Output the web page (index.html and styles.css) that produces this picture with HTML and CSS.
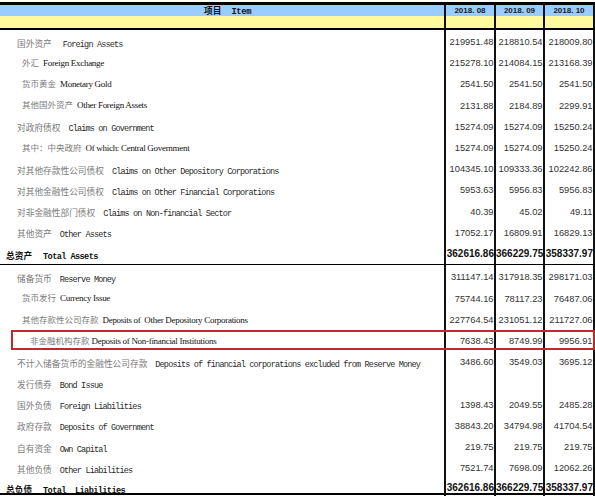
FILE: index.html
```html
<!DOCTYPE html>
<html lang="zh">
<head>
<meta charset="utf-8">
<title>资产负债表</title>
<link rel="stylesheet" href="styles.css">
</head>
<body>
<div class="sheet">
  <div class="row head-blue">
    <div class="lab lab-head"><span class="zh-b">项目</span><span class="mono-b">Item</span></div>
    <div class="num yr">2018. 08</div>
    <div class="num yr">2018. 09</div>
    <div class="num yr">2018. 10</div>
  </div>
  <div class="row head-yellow">
    <div class="lab"></div><div class="num"></div><div class="num"></div><div class="num"></div>
  </div>

  <div class="row m">
    <div class="lab i1"><span class="zh">国外资产</span><span class="en wide">Foreign Assets</span></div>
    <div class="num">219951.48</div><div class="num">218810.54</div><div class="num">218009.80</div>
  </div>
  <div class="row t">
    <div class="lab i2"><span class="zh">外汇</span><span class="tm">Foreign Exchange</span></div>
    <div class="num">215278.10</div><div class="num">214084.15</div><div class="num">213168.39</div>
  </div>
  <div class="row t">
    <div class="lab i2"><span class="zh">货币黄金</span><span class="tm">Monetary Gold</span></div>
    <div class="num">2541.50</div><div class="num">2541.50</div><div class="num">2541.50</div>
  </div>
  <div class="row t">
    <div class="lab i2"><span class="zh">其他国外资产</span><span class="tm">Other Foreign Assets</span></div>
    <div class="num">2131.88</div><div class="num">2184.89</div><div class="num">2299.91</div>
  </div>
  <div class="row m">
    <div class="lab i1"><span class="zh">对政府债权</span><span class="en">Claims on Government</span></div>
    <div class="num">15274.09</div><div class="num">15274.09</div><div class="num">15250.24</div>
  </div>
  <div class="row t">
    <div class="lab i2"><span class="zh">其中：中央政府</span><span class="tm">Of which: Central Government</span></div>
    <div class="num">15274.09</div><div class="num">15274.09</div><div class="num">15250.24</div>
  </div>
  <div class="row m">
    <div class="lab i1"><span class="zh">对其他存款性公司债权</span><span class="en">Claims on Other Depository Corporations</span></div>
    <div class="num">104345.10</div><div class="num">109333.36</div><div class="num">102242.86</div>
  </div>
  <div class="row m">
    <div class="lab i1"><span class="zh">对其他金融性公司债权</span><span class="en">Claims on Other Financial Corporations</span></div>
    <div class="num">5953.63</div><div class="num">5956.83</div><div class="num">5956.83</div>
  </div>
  <div class="row m">
    <div class="lab i1"><span class="zh">对非金融性部门债权</span><span class="en">Claims on Non-financial Sector</span></div>
    <div class="num">40.39</div><div class="num">45.02</div><div class="num">49.11</div>
  </div>
  <div class="row m">
    <div class="lab i1"><span class="zh">其他资产</span><span class="en">Other Assets</span></div>
    <div class="num">17052.17</div><div class="num">16809.91</div><div class="num">16829.13</div>
  </div>
  <div class="row m tot tot-assets">
    <div class="lab i0"><span class="zh-b">总资产</span><span class="en-b">Total Assets</span></div>
    <div class="num">362616.86</div><div class="num">366229.75</div><div class="num">358337.97</div>
  </div>

  <div class="row m">
    <div class="lab i1"><span class="zh">储备货币</span><span class="en">Reserve Money</span></div>
    <div class="num">311147.14</div><div class="num">317918.35</div><div class="num">298171.03</div>
  </div>
  <div class="row t">
    <div class="lab i2"><span class="zh">货币发行</span><span class="tm">Currency Issue</span></div>
    <div class="num">75744.16</div><div class="num">78117.23</div><div class="num">76487.06</div>
  </div>
  <div class="row t">
    <div class="lab i2"><span class="zh">其他存款性公司存款</span><span class="tm">Deposits of&nbsp; Other Depository Corporations</span></div>
    <div class="num">227764.54</div><div class="num">231051.12</div><div class="num">211727.06</div>
  </div>
  <div class="row t">
    <div class="lab i3"><span class="zh">非金融机构存款</span><span class="tm tight">Deposits of Non-financial Institutions</span></div>
    <div class="num">7638.43</div><div class="num">8749.99</div><div class="num">9956.91</div>
  </div>
  <div class="row m">
    <div class="lab i1"><span class="zh">不计入储备货币的金融性公司存款</span><span class="en">Deposits of financial corporations excluded from Reserve Money</span></div>
    <div class="num">3486.60</div><div class="num">3549.03</div><div class="num">3695.12</div>
  </div>
  <div class="row m">
    <div class="lab i1"><span class="zh">发行债券</span><span class="en">Bond Issue</span></div>
    <div class="num"></div><div class="num"></div><div class="num"></div>
  </div>
  <div class="row m">
    <div class="lab i1"><span class="zh">国外负债</span><span class="en">Foreign Liabilities</span></div>
    <div class="num">1398.43</div><div class="num">2049.55</div><div class="num">2485.28</div>
  </div>
  <div class="row m">
    <div class="lab i1"><span class="zh">政府存款</span><span class="en">Deposits of Government</span></div>
    <div class="num">38843.20</div><div class="num">34794.98</div><div class="num">41704.54</div>
  </div>
  <div class="row m">
    <div class="lab i1"><span class="zh">自有资金</span><span class="en">Own Capital</span></div>
    <div class="num">219.75</div><div class="num">219.75</div><div class="num">219.75</div>
  </div>
  <div class="row m">
    <div class="lab i1"><span class="zh">其他负债</span><span class="en">Other Liabilities</span></div>
    <div class="num">7521.74</div><div class="num">7698.09</div><div class="num">12062.26</div>
  </div>
  <div class="row m tot tot-liab">
    <div class="lab i0"><span class="zh-b">总负债</span><span class="en-b">Total  Liabilities</span></div>
    <div class="num">362616.86</div><div class="num">366229.75</div><div class="num">358337.97</div>
  </div>

  <div class="highlight"></div>
</div>
</body>
</html>
```

FILE: styles.css
```css
* {
  box-sizing: border-box;
  margin: 0;
  padding: 0;
}

html, body {
  background: #ffffff;
}

body {
  width: 595px;
  height: 498px;
  overflow: hidden;
  font-family: "Liberation Mono", monospace;
}

.sheet {
  position: relative;
  margin-top: 2px;
  border-top: 3px solid #000;
}

.row {
  display: grid;
  grid-template-columns: 444px 50px 49px 52px;
  height: 21.2px;
}

.row > .num {
  border-left: 2px solid #111;
}

.row > .num:last-child {
  border-right: 2px solid #111;
}

.lab {
  white-space: pre;
  line-height: 10px;
  padding-top: 7.7px;
  overflow: visible;
}

.num {
  font-family: "Liberation Sans", Arial, sans-serif;
  font-size: 9.3px;
  color: #333;
  text-align: right;
  line-height: 10px;
  padding-top: 7px;
  padding-right: 0.5px;
  white-space: nowrap;
}

/* header */
.head-blue {
  height: 11px;
  background: #99ccff;
}

.head-blue .lab,
.head-blue .num {
  padding-top: 0;
  line-height: 11px;
}

.lab-head {
  padding-left: 204px;
}

.yr {
  text-align: center;
  font-weight: bold;
  font-size: 8px;
  color: #1a1a1a;
  padding-right: 0;
}

.head-yellow {
  height: 14px;
  background: #fffa9e;
  border-bottom: 2px solid #000;
}

/* label parts */
.zh {
  font-family: "Noto Sans CJK SC", sans-serif;
  font-size: 8.7px;
  color: #7a7a7a;
}

.zh-b {
  font-family: "Noto Sans CJK SC", sans-serif;
  font-size: 8.7px;
  font-weight: bold;
  color: #111;
}

.en {
  font-family: "Liberation Mono", monospace;
  font-size: 8.5px;
  letter-spacing: -0.83px;
  color: #2a2a2a;
  margin-left: 8px;
}

.en.wide {
  margin-left: 11px;
}

.en-b {
  font-family: "Liberation Mono", monospace;
  font-size: 8.6px;
  letter-spacing: -0.6px;
  font-weight: bold;
  color: #111;
  margin-left: 11px;
}

.mono-b {
  font-family: "Liberation Mono", monospace;
  font-size: 8.8px;
  letter-spacing: -0.3px;
  font-weight: bold;
  color: #111;
  margin-left: 10px;
}

.tm {
  font-family: "Liberation Serif", serif;
  font-size: 9px;
  color: #111;
  margin-left: 4px;
  letter-spacing: -0.3px;
}

.tm.tight {
  margin-left: 2px;
}

.t .lab {
  padding-top: 5.8px;
}

.t .zh {
  font-size: 8.5px;
}

/* indents */
.i0 { padding-left: 6px; }
.i1 { padding-left: 17px; }
.i2 { padding-left: 22px; }
.i3 { padding-left: 30px; }

/* totals */
.tot .num {
  font-weight: bold;
  font-size: 10px;
  color: #111;
  padding-right: 0;
}

.tot-assets {
  height: 23.5px;
  border-bottom: 1.5px solid #000;
}

.tot-liab {
  height: 17.5px;
  border-bottom: 2px solid #000;
}

.tot-liab .lab {
  padding-top: 6.7px;
}

.tot-liab .num {
  padding-top: 6px;
}

/* red highlight around the non-financial deposits row */
.highlight {
  position: absolute;
  left: 11px;
  top: 325px;
  width: 584px;
  height: 19.5px;
  border: 2.6px solid #c1272d;
}
```
